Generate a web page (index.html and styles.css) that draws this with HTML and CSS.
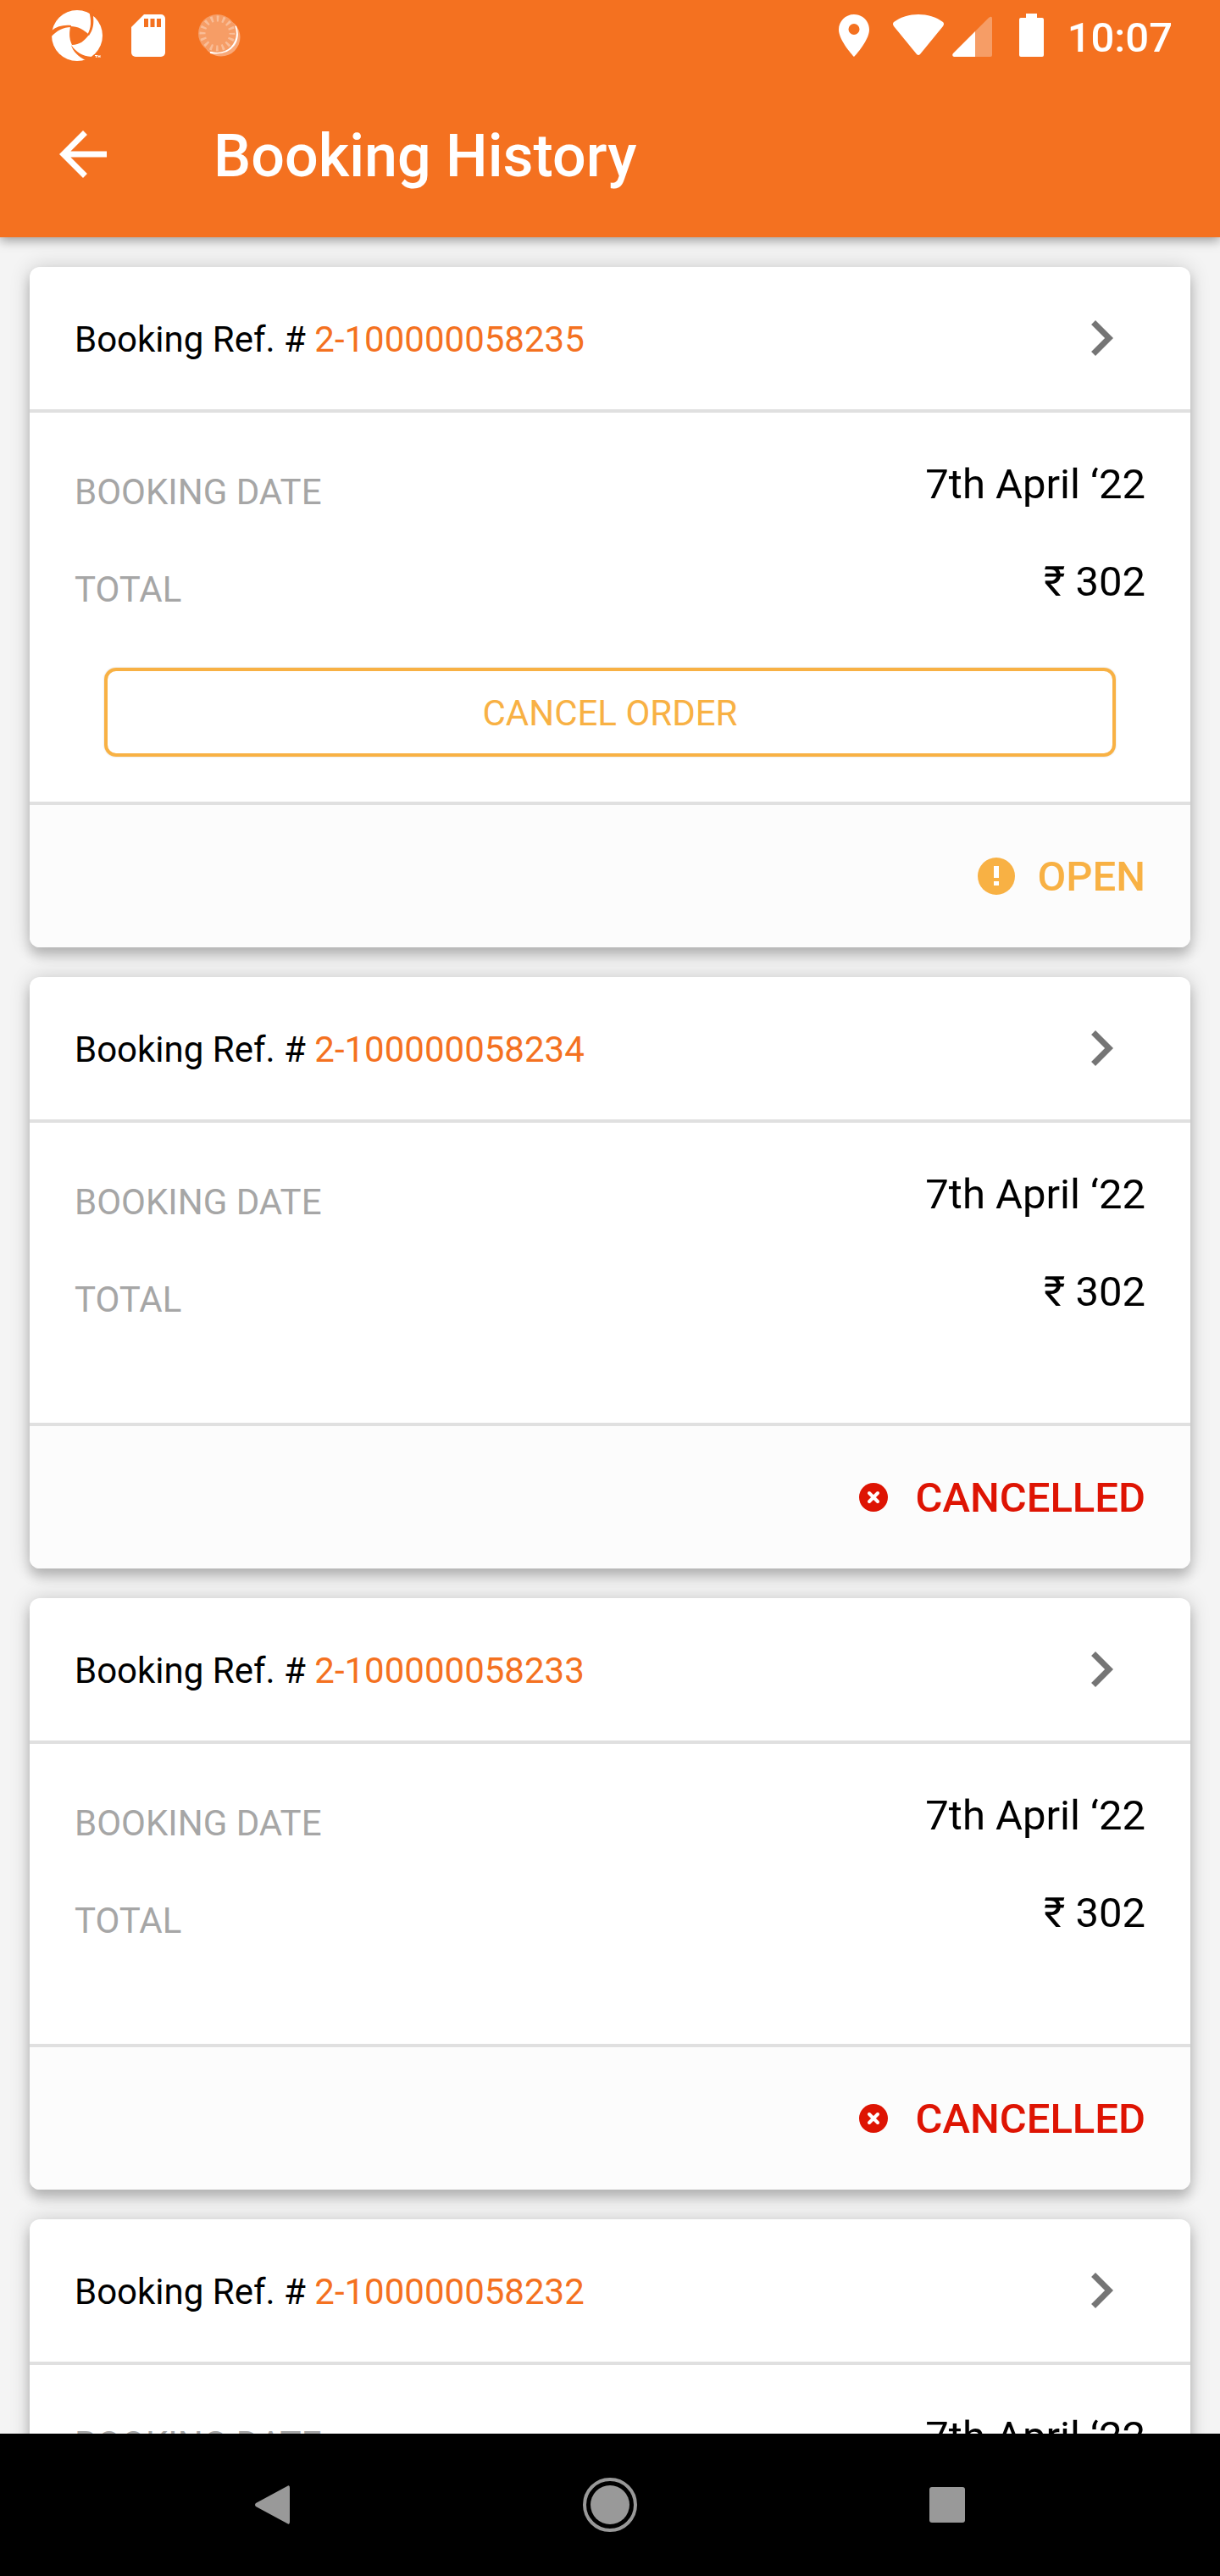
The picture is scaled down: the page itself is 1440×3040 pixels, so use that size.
FILE: index.html
```html
<!DOCTYPE html>
<html lang="en">
<head>
<meta charset="utf-8">
<meta name="viewport" content="width=device-width, initial-scale=1">
<title>Booking History</title>
<link rel="stylesheet" href="styles.css">
</head>
<body>
<svg class="defs" aria-hidden="true">
  <symbol id="chevron" viewBox="0 0 24 24"><path d="M10 6L8.590 7.410 13.170 12l-4.580 4.590L10 18l6-6z"/></symbol>
  <symbol id="cancelled" viewBox="0 0 49 49"><circle cx="24" cy="24" r="17"/><path d="M19 19L29 29M29 19L19 29" fill="none" stroke="#fff" stroke-width="4" stroke-linecap="round"/></symbol>
</svg>
<div class="app">
  <header class="header">
    <div class="status-bar">
      <div class="notifications">
        <svg width="60" height="84" viewBox="61 0 60 84" aria-hidden="true">
          <circle cx="91" cy="42" r="30" fill="#fff"/>
          <g fill="#f47120">
            <path d="M83 31C92 31 99 35 105 41C100 48 94 53 85 53C81 45 82 38 83 31Z"/>
            <path d="M103 41C108 33 108 24 105 13L111 11L110 19C111 28 110 35 105 42Z"/>
            <path d="M84 30C75 29 67 31 61 36L60 44C66 37 74 32 84 32Z"/>
            <path d="M84 53C90 62 97 66 108 67L112 71L101 71C93 67 86 61 84 53Z"/>
          </g>
          <path d="M112 65.500h3M113.500 65.500v2.500M116 68v-2.500l1 1.500 1-1.500V68" fill="none" stroke="#fff" stroke-width="1"/>
        </svg>
        <svg width="40" height="84" viewBox="155 0 40 84" aria-hidden="true">
          <path d="M170 17h20a5 5 0 0 1 5 5v40a5 5 0 0 1-5 5h-30a5 5 0 0 1-5-5V32z" fill="#fff"/>
          <path d="M170 22h5v10h-5zM177.500 22h5v10h-5zM185 22h5v10h-5z" fill="#f47120"/>
        </svg>
        <svg width="55" height="84" viewBox="229 0 55 84" aria-hidden="true">
          <circle cx="261" cy="44" r="22.500" fill="#f9a878"/>
          <path d="M278 31C284 45 276 66 248 62C268 62 279 50 278 31Z" fill="#fff" stroke="#fff" stroke-width="2"/>
          <circle cx="256.500" cy="39.500" r="22.500" fill="#f69d66"/>
          <circle cx="256.500" cy="39.500" r="17.500" fill="none" stroke="#f9bd97" stroke-width="7" stroke-dasharray="2.600 4.272" stroke-dashoffset="1.300"/>
        </svg>
      </div>
      <div class="system">
        <svg width="36" height="84" viewBox="990 0 36 84" aria-hidden="true"><path fill="#fff" fill-rule="evenodd" d="M1008 17C998 17 990 25 990 35C990 48 1008 67 1008 67S1026 48 1026 35C1026 25 1018 17 1008 17ZM1008 28a6.500 6.500 0 1 1 0 13a6.500 6.500 0 0 1 0-13Z"/></svg>
        <svg class="wifi" width="60" height="84" viewBox="1054 0 60 84" aria-hidden="true"><path fill="#fff" d="M1055 26C1071 14 1097 14 1113 26Q1115 28 1113 31L1086 64Q1084 66 1082 64L1055 31Q1053 28 1055 26Z"/></svg>
        <svg class="signal" width="47" height="84" viewBox="1124 0 47 84" aria-hidden="true"><path fill="#f69d66" d="M1151 37L1167 21Q1171 18 1171 22V65Q1171 67 1169 67H1151Z"/><path fill="#fff" d="M1151 37V67H1126Q1123 66 1125 63Z"/></svg>
        <svg class="battery" width="29" height="84" viewBox="1203 0 29 84" aria-hidden="true"><path fill="#fff" d="M1211 16h13v5h6q2 0 2 2v42q0 2-2 2h-25q-2 0-2-2V23q0-2 2-2h6z"/></svg>
        <time class="clock">10:07</time>
      </div>
    </div>
    <div class="app-bar">
      <button class="back" type="button" aria-label="Back"><svg width="84" height="84" viewBox="0 0 24 24"><path fill="#fff" d="M20 11H7.830l5.590-5.590L12 4l-8 8 8 8 1.410-1.410L7.830 13H20z"/></svg></button>
      <h1 class="title">Booking History</h1>
    </div>
  </header>
  <main class="bookings">
    <article class="card">
      <a class="card-head" href="#58235"><span>Booking Ref. # <span class="ref">2-100000058235</span></span><svg class="chevron"><use href="#chevron"/></svg></a>
      <div class="card-body">
        <dl class="details">
          <div class="row"><dt>BOOKING DATE</dt><dd>7th April ‘22</dd></div>
          <div class="row"><dt>TOTAL</dt><dd>₹ 302</dd></div>
        </dl>
        <button class="cancel" type="button">CANCEL ORDER</button>
      </div>
      <div class="card-foot open"><svg class="state-icon" viewBox="0 0 49 49"><circle cx="24" cy="24" r="22"/><path fill="#fff" d="M21 12h6v14h-6zM21 30h6v5h-6z"/></svg><span>OPEN</span></div>
    </article>
    <article class="card">
      <a class="card-head" href="#58234"><span>Booking Ref. # <span class="ref">2-100000058234</span></span><svg class="chevron"><use href="#chevron"/></svg></a>
      <div class="card-body">
        <dl class="details">
          <div class="row"><dt>BOOKING DATE</dt><dd>7th April ‘22</dd></div>
          <div class="row"><dt>TOTAL</dt><dd>₹ 302</dd></div>
        </dl>
      </div>
      <div class="card-foot cancelled"><svg class="state-icon"><use href="#cancelled"/></svg><span>CANCELLED</span></div>
    </article>
    <article class="card">
      <a class="card-head" href="#58233"><span>Booking Ref. # <span class="ref">2-100000058233</span></span><svg class="chevron"><use href="#chevron"/></svg></a>
      <div class="card-body">
        <dl class="details">
          <div class="row"><dt>BOOKING DATE</dt><dd>7th April ‘22</dd></div>
          <div class="row"><dt>TOTAL</dt><dd>₹ 302</dd></div>
        </dl>
      </div>
      <div class="card-foot cancelled"><svg class="state-icon"><use href="#cancelled"/></svg><span>CANCELLED</span></div>
    </article>
    <article class="card">
      <a class="card-head" href="#58232"><span>Booking Ref. # <span class="ref">2-100000058232</span></span><svg class="chevron"><use href="#chevron"/></svg></a>
      <div class="card-body">
        <dl class="details">
          <div class="row"><dt>BOOKING DATE</dt><dd>7th April ‘22</dd></div>
        </dl>
      </div>
    </article>
  </main>
  <nav class="nav-bar" aria-label="System">
    <button type="button" aria-label="Back"><svg width="64" height="64" viewBox="0 0 64 64"><path d="M12 30L49 10Q52 8 52 12V52Q52 56 49 54L12 34Q10 32 12 30Z"/></svg></button>
    <button type="button" aria-label="Home"><svg width="64" height="64" viewBox="0 0 64 64"><circle cx="32" cy="32" r="23"/><circle cx="32" cy="32" r="30" fill="none" stroke="#999" stroke-width="4"/></svg></button>
    <button type="button" aria-label="Recent apps"><svg width="64" height="64" viewBox="0 0 64 64"><rect x="11" y="11" width="42" height="42" rx="3"/></svg></button>
  </nav>
</div>
</body>
</html>
```
FILE: styles.css
```css
* { box-sizing: border-box; }

body {
  margin: 0;
  font-family: Roboto, "Noto Sans", sans-serif;
  font-size: 42px;
  line-height: 49px;
  color: #000;
}

button {
  padding: 0;
  border: 0;
  background: none;
  font: inherit;
}

svg { display: block; flex: none; }

.defs { display: none; }

.app {
  display: flex;
  flex-direction: column;
  height: 100vh;
  background: #f4f4f4;
}

.header {
  position: relative;
  z-index: 1;
  flex: none;
  background: #f47120;
  color: #fff;
  box-shadow: 0 4px 12px rgba(0, 0, 0, 0.36);
}

.status-bar {
  display: flex;
  justify-content: space-between;
  height: 84px;
  padding: 0 56px 0 61px;
}

.notifications,
.system {
  display: flex;
  align-items: center;
}

.notifications { gap: 34px; }

.wifi { margin-left: 28px; }
.signal { margin-left: 10px; }
.battery { margin-left: 32px; }

.clock {
  margin-left: 28px;
  padding-top: 4px;
  font-size: 49px;
  font-weight: 500;
}

.app-bar {
  display: flex;
  align-items: center;
  gap: 112px;
  height: 196px;
  padding: 0 56px;
}

.title {
  margin: 0;
  padding-top: 4px;
  font-size: 70px;
  line-height: 84px;
  font-weight: 500;
}

.bookings {
  flex: 1;
  min-height: 0;
  display: flex;
  flex-direction: column;
  gap: 35px;
  padding: 35px;
  overflow-y: auto;
  scrollbar-width: none;
}

.card {
  flex: none;
  border-radius: 12px;
  background: #fff;
  box-shadow: 0 10px 14px rgba(0, 0, 0, 0.2), 0 0 24px rgba(0, 0, 0, 0.16);
}

.card-head {
  display: flex;
  align-items: center;
  justify-content: space-between;
  height: 172px;
  padding: 0 63px 0 53px;
  border-bottom: 4px solid #e0e0e0;
  color: inherit;
  text-decoration: none;
}

.card-head > span { padding-top: 2px; }

.ref { color: #f47120; }

.chevron {
  width: 84px;
  height: 84px;
  fill: #757575;
}

.card-body { padding: 56px 53px 53px; }

.details {
  display: flex;
  flex-direction: column;
  gap: 58px;
  margin: 0;
  padding-bottom: 73px;
}

.row {
  display: flex;
  align-items: flex-start;
  justify-content: space-between;
}

.row dt {
  padding-top: 13px;
  height: 57px;
  color: #a6a6a6;
}

.row dd {
  margin: 0;
  font-size: 49px;
  line-height: 57px;
}

.cancel {
  display: block;
  width: calc(100% - 70px);
  height: 105px;
  margin: 0 35px;
  padding-top: 2px;
  border: 4px solid #f8b144;
  border-radius: 14px;
  color: #f8b144;
  box-shadow: 0 0 2px rgba(0, 0, 0, 0.2);
}

.card-foot {
  display: flex;
  align-items: center;
  justify-content: flex-end;
  gap: 24px;
  height: 172px;
  padding: 0 53px;
  border-top: 4px solid #e0e0e0;
  border-radius: 0 0 12px 12px;
  background: #fcfcfc;
  font-size: 49px;
  line-height: 57px;
  font-weight: 500;
}

.open { color: #f8b144; }
.cancelled { color: #de1403; }

.state-icon {
  width: 49px;
  height: 49px;
  fill: currentColor;
}

.nav-bar {
  flex: none;
  display: grid;
  grid-template-columns: repeat(3, 1fr);
  height: 168px;
  padding: 0 123px;
  background: #000;
}

.nav-bar button {
  display: grid;
  place-items: center;
}

.nav-bar svg { fill: #999; }
```
